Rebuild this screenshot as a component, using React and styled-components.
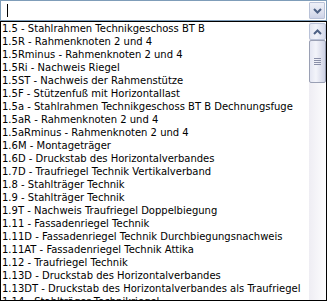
import React from 'react';
import styled, { createGlobalStyle } from 'styled-components';

const items = [
    '1.5 - Stahlrahmen Technikgeschoss BT B',
    '1.5R - Rahmenknoten 2 und 4',
    '1.5Rminus - Rahmenknoten 2 und 4',
    '1.5Ri - Nachweis Riegel',
    '1.5ST - Nachweis der Rahmenstütze',
    '1.5F - Stützenfuß mit Horizontallast',
    '1.5a - Stahlrahmen Technikgeschoss BT B Dechnungsfuge',
    '1.5aR - Rahmenknoten 2 und 4',
    '1.5aRminus - Rahmenknoten 2 und 4',
    '1.6M - Montageträger',
    '1.6D - Druckstab des Horizontalverbandes',
    '1.7D - Traufriegel Technik Vertikalverband',
    '1.8 - Stahlträger Technik',
    '1.9 - Stahlträger Technik',
    '1.9T - Nachweis Traufriegel Doppelbiegung',
    '1.11 - Fassadenriegel Technik',
    '1.11D - Fassadenriegel Technik Durchbiegungsnachweis',
    '1.11AT - Fassadenriegel Technik Attika',
    '1.12 - Traufriegel Technik',
    '1.13D - Druckstab des Horizontalverbandes',
    '1.13DT - Druckstab des Horizontalverbandes als Traufriegel',
    '1.14 - Stahlträger Technikriegel',
];

export default function App() {
    return (
        <>
            <GlobalStyle />
            <Page>
                <Combo>
                    <Field>
                        <Caret />
                    </Field>
                    <DropButton>
                        <Chevron down />
                    </DropButton>
                </Combo>
                <List>
                    <Rows>
                        {items.map((item, index) => (
                            <Row key={index}>{item}</Row>
                        ))}
                    </Rows>
                    <ScrollBar>
                        <ArrowButton>
                            <Chevron />
                        </ArrowButton>
                        <Thumb>
                            <Grip>
                                <span />
                                <span />
                                <span />
                                <span />
                            </Grip>
                        </Thumb>
                        <Track />
                    </ScrollBar>
                </List>
            </Page>
        </>
    );
}

function Chevron({ down }) {
    return (
        <svg width="9" height="6" viewBox="0 0 9 6">
            <path
                d={down ? 'M1 1 L4.5 4.5 L8 1' : 'M1 5 L4.5 1.5 L8 5'}
                fill="none"
                stroke="#4d6185"
                strokeWidth="2"
            />
        </svg>
    );
}

const GlobalStyle = createGlobalStyle`
    html, body {
        margin: 0;
        padding: 0;
        background: #ffffff;
        overflow: hidden;
    }
    body {
        font-family: Tahoma, "DejaVu Sans", sans-serif;
    }
`;

const Page = styled.div`
    width: 327px;
    height: 301px;
    display: flex;
    flex-direction: column;
    overflow: hidden;
`;

const Combo = styled.div`
    height: 21px;
    box-sizing: border-box;
    border: 1px solid #7f9db9;
    display: flex;
    padding: 1px;
    background: #ffffff;
`;

const Field = styled.div`
    flex: 1;
    display: flex;
    align-items: center;
    padding-left: 5px;
`;

const Caret = styled.div`
    width: 1px;
    height: 13px;
    background: #000000;
`;

const DropButton = styled.div`
    width: 16px;
    box-sizing: border-box;
    border: 1px solid #b9c2d8;
    border-radius: 1px;
    background: linear-gradient(#eef0f8, #dde1ef 60%, #cdd3e8);
    display: flex;
    align-items: center;
    justify-content: center;
`;

const List = styled.div`
    flex: 1;
    border: 1px solid #000000;
    display: flex;
    min-height: 0;
    background: #ffffff;
`;

const Rows = styled.div`
    flex: 1;
    overflow: hidden;
`;

const Row = styled.div`
    height: 13px;
    line-height: 13px;
    padding-left: 1px;
    font-size: 10px;
    color: #000000;
    white-space: nowrap;
`;

const ScrollBar = styled.div`
    width: 17px;
    display: flex;
    flex-direction: column;
    background: linear-gradient(90deg, #eeedf3, #fdfdfe);
`;

const ArrowButton = styled.div`
    height: 17px;
    box-sizing: border-box;
    border: 1px solid #b9c2d8;
    border-radius: 2px;
    background: linear-gradient(90deg, #e3e6f2, #f1f3fa 40%, #d3d8ea);
    display: flex;
    align-items: center;
    justify-content: center;
    margin-top: 1px;
`;

const Thumb = styled.div`
    height: 43px;
    box-sizing: border-box;
    border: 1px solid #9aa0b4;
    border-radius: 2px;
    background: linear-gradient(90deg, #e4e6f2, #f3f4fa 40%, #cdd1e4);
    display: flex;
    align-items: center;
    justify-content: center;
`;

const Grip = styled.div`
    display: flex;
    flex-direction: column;
    gap: 1px;
    span {
        display: block;
        width: 7px;
        height: 1px;
        background: #8a8fa8;
    }
`;

const Track = styled.div`
    flex: 1;
`;
